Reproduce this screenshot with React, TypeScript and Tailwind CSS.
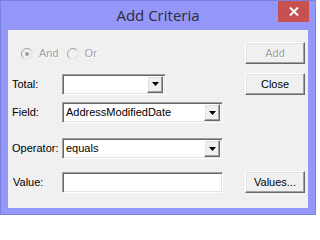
import React from "react";

const raised =
  "border border-t-white border-l-white border-r-[#696969] border-b-[#696969] shadow-[inset_-1px_-1px_0_#a0a0a0,inset_1px_1px_0_#e3e3e3]";
const sunken =
  "border border-t-[#a0a0a0] border-l-[#a0a0a0] border-r-white border-b-white shadow-[inset_1px_1px_0_#696969,inset_-1px_-1px_0_#e3e3e3]";

function Button({ label, disabled }: { label: string; disabled?: boolean }) {
  return (
    <div
      className={`flex h-[22px] w-[60px] items-center justify-center bg-[#f0f0f0] ${raised} ${
        disabled ? "text-[#a0a0a0] [text-shadow:1px_1px_0_#fff]" : "text-black"
      }`}
    >
      {label}
    </div>
  );
}

function Combo({ value, width }: { value?: string; width: string }) {
  return (
    <div className={`flex h-[21px] ${width} items-center bg-white p-[2px] ${sunken}`}>
      <span className="flex-1 pl-[1px] leading-none">{value}</span>
      <div className={`flex h-[17px] w-[16px] items-center justify-center bg-[#f0f0f0] ${raised}`}>
        <svg width="7" height="4" viewBox="0 0 7 4">
          <path d="M0 0h7L3.5 4z" fill="#000" />
        </svg>
      </div>
    </div>
  );
}

function Radio({ label, checked }: { label: string; checked?: boolean }) {
  return (
    <div className="flex items-center gap-[6px]">
      <svg width="12" height="12" viewBox="0 0 12 12">
        <circle cx="6" cy="6" r="5.5" fill="#f0f0f0" stroke="#a0a0a0" />
        <path d="M10 2.5A5 5 0 0 1 2.5 10" stroke="#fff" fill="none" />
        {checked && <circle cx="6" cy="6" r="2" fill="#a0a0a0" />}
      </svg>
      <span className="text-[#a0a0a0] [text-shadow:1px_1px_0_#fff]">{label}</span>
    </div>
  );
}

export default function App() {
  return (
    <div className="flex h-[215px] w-[316px] flex-col border border-[#7b7fe0] bg-[#9497f7] font-['Liberation_Sans',Arial,sans-serif] text-[11px] text-black">
      {/* caption */}
      <div className="relative flex h-[29px] shrink-0 items-center justify-center pb-[1px]">
        <span className="font-['Open_Sans','Noto_Sans',sans-serif] text-[15px] text-[#2c2c3a]">
          Add Criteria
        </span>
        <div className="absolute right-[6px] top-0 flex h-[21px] w-[31px] items-center justify-center bg-[#c75050]">
          <svg width="10" height="9" viewBox="0 0 10 9">
            <path d="M1 0.5l8 8M9 0.5l-8 8" stroke="#fff" strokeWidth="2" />
          </svg>
        </div>
      </div>

      {/* client area */}
      <div className="mx-[7px] flex h-[178px] flex-col bg-[#f0f0f0] pl-[4px] pt-[12px]">
        <div className="flex h-[22px] items-center">
          <div className="flex w-[233px] items-center gap-[8px] pl-[9px] pt-[1px]">
            <Radio label="And" checked />
            <Radio label="Or" />
          </div>
          <Button label="Add" disabled />
        </div>

        <div className="mt-[9px] flex h-[22px] items-center">
          <span className="w-[50px]">Total:</span>
          <div className="w-[183px]">
            <Combo width="w-[104px]" />
          </div>
          <Button label="Close" />
        </div>

        <div className="mt-[7px] flex h-[21px] items-center">
          <span className="w-[50px]">Field:</span>
          <Combo value="AddressModifiedDate" width="w-[161px]" />
        </div>

        <div className="mt-[15px] flex h-[21px] items-center">
          <span className="w-[50px]">Operator:</span>
          <Combo value="equals" width="w-[161px]" />
        </div>

        <div className="mt-[12px] flex h-[22px] items-center">
          <span className="w-[50px] pl-[1px]">Value:</span>
          <div className="w-[183px]">
            <div className={`h-[21px] w-[161px] bg-white ${sunken}`} />
          </div>
          <Button label="Values..." />
        </div>
      </div>
    </div>
  );
}
